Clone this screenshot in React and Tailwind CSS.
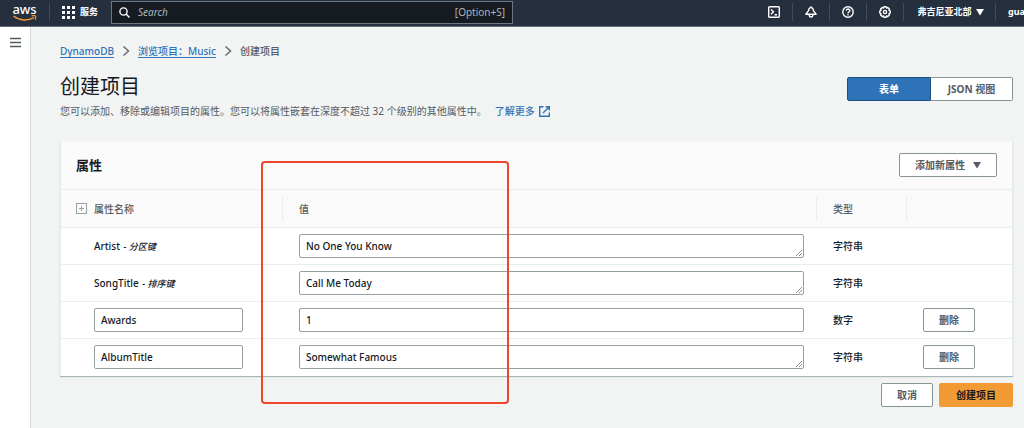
import React, { useState } from "react";

const attributes = [
  { name: "Artist", keyLabel: "分区键", value: "No One You Know", type: "字符串" },
  { name: "SongTitle", keyLabel: "排序键", value: "Call Me Today", type: "字符串" },
  { name: "Awards", value: "1", type: "数字" },
  { name: "AlbumTitle", value: "Somewhat Famous", type: "字符串" },
];

const Caret = () => (
  <svg className="w-2 h-2" viewBox="0 0 8 8" fill="currentColor" aria-hidden="true">
    <path d="M0 1h8L4 7.500z" />
  </svg>
);

const Chevron = () => (
  <svg
    className="w-2 h-3"
    viewBox="0 0 8 12"
    fill="none"
    stroke="#687078"
    strokeWidth="1.6"
    aria-hidden="true"
  >
    <path d="M1.5 1.5 6.5 6l-5 4.5" />
  </svg>
);

const NavIcon = ({ label, children }) => (
  <button
    aria-label={label}
    className="w-[37px] h-[18px] flex items-center justify-center border-r border-[#414b5a]"
  >
    <svg
      className="w-3 h-3"
      viewBox="0 0 12 12"
      fill="none"
      stroke="#fff"
      strokeWidth="1.4"
      strokeLinejoin="round"
    >
      {children}
    </svg>
  </button>
);

const Header = () => (
  <header className="h-[27px] pb-[2px] flex items-center bg-[#252f3e] border-b border-[#5f6b7a] text-white">
    <a href="#home" className="w-[50px] h-[18px] flex flex-col items-center border-r border-[#414b5a]">
      <span className="text-[13px] leading-3 font-medium">aws</span>
      <svg
        className="w-6 h-[6px] shrink-0"
        viewBox="0 0 24 6"
        fill="none"
        stroke="#f29b34"
        strokeWidth="1.4"
        aria-hidden="true"
      >
        <path d="M.5 1c6 4.800 14 5.200 20.500 1.600" />
        <path d="M18.500.8c4.500-.8 5.200.4 3.500 4" strokeWidth="1.2" />
      </svg>
    </a>
    <button className="ml-3 flex items-center gap-[5px] text-[9px] font-bold">
      <svg className="w-[13px] h-[13px]" viewBox="0 0 13 13" fill="#fff" aria-hidden="true">
        {[0, 5, 10].map((y) =>
          [0, 5, 10].map((x) => <rect key={x + "-" + y} x={x} y={y} width="3" height="3" />)
        )}
      </svg>
      服务
    </button>
    <label className="ml-[13px] w-[402px] h-[23px] flex items-center gap-2 px-[7px] bg-[#161b21] border border-[#6d777f]">
      <svg
        className="w-[11px] h-[11px] shrink-0"
        viewBox="0 0 11 11"
        fill="none"
        stroke="#fff"
        strokeWidth="1.4"
        aria-hidden="true"
      >
        <circle cx="4.500" cy="4.500" r="3.600" />
        <path d="m7 7 3.500 3.500" />
      </svg>
      <input
        type="text"
        aria-label="Search"
        placeholder="Search"
        className="flex-1 min-w-0 text-[10px] outline-none placeholder:italic placeholder:text-[#aab7b8]"
      />
      <span className="text-[10px] text-[#aab7b8]">[Option+S]</span>
    </label>
    <nav className="ml-auto flex items-center text-[9px] font-bold whitespace-nowrap">
      <NavIcon label="CloudShell">
        <rect x=".7" y=".7" width="10.600" height="10.600" rx="1" />
        <path d="m3 3.500 2.500 2.300L3 8.200M6.500 8.800h2.500" />
      </NavIcon>
      <NavIcon label="通知">
        <path d="M6 .3v1.300M6 1.600c1.700 0 2.300 1.200 2.300 2.800L11.200 8.300H.8l2.900-3.900c0-1.600.6-2.800 2.300-2.800zM4.200 8.500c0 3.400 3.600 3.400 3.600 0" />
      </NavIcon>
      <NavIcon label="帮助">
        <circle cx="6" cy="6" r="5.200" />
        <path d="M4.300 4.800C4.300 2.500 7.800 2.500 7.800 4.700 7.800 5.800 6 5.800 6 7.400M6 8.200v1.200" />
      </NavIcon>
      <NavIcon label="设置">
        <path d="M4.900.8h2.200l.4 1.200 1.300-.5 1.600 1.600-.5 1.300 1.300.5v2.200l-1.300.5.5 1.300-1.600 1.600-1.300-.5-.4 1.200H4.900l-.4-1.200-1.300.5-1.600-1.600.5-1.300-1.300-.5V4.900l1.300-.5-.5-1.300 1.600-1.600 1.300.5z" />
        <circle cx="6" cy="6" r="1.600" />
      </NavIcon>
      <button className="h-[18px] w-[92px] pl-[2px] flex items-center justify-center gap-1 border-r border-[#414b5a]">
        弗吉尼亚北部
        <Caret />
      </button>
      <button className="w-7 pl-3 text-left overflow-hidden">gua</button>
    </nav>
  </header>
);

const Button = ({ className = "", children }) => (
  <button
    className={`h-6 px-[15px] bg-white border border-[#879596] rounded-xs font-bold text-[#545b64] whitespace-nowrap ${className}`}
  >
    {children}
  </button>
);

const fieldClass =
  "block w-full h-6 px-[6px] bg-white border border-[#95a0a1] rounded-xs text-[#16191f] leading-[22px] outline-none";

const ValueField = ({ attribute }) => {
  const label = `${attribute.name} 值`;

  if (attribute.type === "数字") {
    return <input className={fieldClass} aria-label={label} defaultValue={attribute.value} />;
  }
  return (
    <div className="relative">
      <textarea
        rows={1}
        className={`${fieldClass} resize-none overflow-hidden`}
        aria-label={label}
        defaultValue={attribute.value}
      />
      <svg
        className="absolute right-[2px] bottom-[2px] w-[6px] h-[6px] pointer-events-none"
        viewBox="0 0 6 6"
        stroke="#777"
        strokeWidth=".8"
        aria-hidden="true"
      >
        <path d="M0 6 6 0M3 6l3-3" />
      </svg>
    </div>
  );
};

const AttributesTable = () => (
  <table className="w-full table-fixed text-left font-medium">
    <colgroup>
      <col className="w-[222px]" />
      <col />
      <col className="w-[90px]" />
      <col className="w-[105px]" />
    </colgroup>
    <thead className="bg-[#fafafa] text-[#545b64]">
      <tr className="h-[38px] border-y border-[#eaeded]">
        <th className="p-0 font-medium">
          <div className="h-6 pl-[15px] flex items-center gap-[7px] border-r border-[#eaeded]">
            <button aria-label="展开全部">
              <svg
                className="block w-[11px] h-[11px]"
                viewBox="0 0 11 11"
                fill="none"
                stroke="#95a5a6"
                aria-hidden="true"
              >
                <rect x=".5" y=".5" width="10" height="10" />
                <path d="M5.500 3v5M3 5.500h5" />
              </svg>
            </button>
            属性名称
          </div>
        </th>
        <th className="p-0 font-medium">
          <div className="h-6 pl-4 flex items-center border-r border-[#eaeded]">值</div>
        </th>
        <th className="p-0 font-medium">
          <div className="h-6 pl-4 flex items-center border-r border-[#eaeded]">类型</div>
        </th>
        <th className="p-0" aria-label="操作" />
      </tr>
    </thead>
    <tbody className="text-[#16191f]">
      {attributes.map((attribute) => (
        <tr key={attribute.name} className="h-[37px] border-b border-[#eaeded] last:border-b-0">
          <td className="pl-[33px] pr-10">
            {attribute.keyLabel ? (
              <>
                {attribute.name} <i className="ml-px text-[9px]">- {attribute.keyLabel}</i>
              </>
            ) : (
              <input className={fieldClass} aria-label="属性名称" defaultValue={attribute.name} />
            )}
          </td>
          <td className="pl-4 pr-[13px]">
            <ValueField attribute={attribute} />
          </td>
          <td className="pl-4">{attribute.type}</td>
          <td className="pl-4">{!attribute.keyLabel && <Button>删除</Button>}</td>
        </tr>
      ))}
    </tbody>
  </table>
);

const App = () => {
  const [view, setView] = useState("form");

  const viewClass = (name) =>
    view === name
      ? "bg-[#2e73b8] text-white border-[#1d4f83]"
      : "bg-white text-[#545b64] border-[#879596]";

  return (
    <div className="min-h-screen flex flex-col bg-[#f2f3f3] text-[10px] leading-4 font-['Noto_Sans','Noto_Sans_CJK_SC',sans-serif]">
      <Header />
      <div className="flex-1 flex">
        <aside className="w-[31px] shrink-0 pt-[10px] flex flex-col items-center bg-white border-r border-[#d5dbdb]">
          <button aria-label="打开导航">
            <svg
              className="block w-[11px] h-[11px]"
              viewBox="0 0 11 11"
              stroke="#545b64"
              strokeWidth="1.4"
              aria-hidden="true"
            >
              <path d="M0 1.500h11M0 5.500h11M0 9.500h11" />
            </svg>
          </button>
        </aside>

        <main className="flex-1 min-w-0 pl-[29px] pr-[11px] pt-4">
          {/* Breadcrumbs */}
          <nav className="flex items-center gap-2 text-[#545b64] font-medium">
            <a href="#dynamodb" className="text-[#2e73b8] underline underline-offset-2">
              DynamoDB
            </a>
            <Chevron />
            <a href="#music" className="text-[#2e73b8] underline underline-offset-2">
              浏览项目：Music
            </a>
            <Chevron />
            <span>创建项目</span>
          </nav>

          {/* Page title */}
          <div className="mt-4 flex items-center justify-between">
            <div>
              <h1 className="text-[20px] leading-6 text-[#16191f]">创建项目</h1>
              <p className="mt-1 text-[#545b64]">
                您可以添加、移除或编辑项目的属性。您可以将属性嵌套在深度不超过 32 个级别的其他属性中。
                <a
                  href="#more"
                  className="ml-2 inline-flex items-center gap-1 font-medium text-[#2e73b8]"
                >
                  了解更多
                  <svg
                    className="w-[11px] h-[11px]"
                    viewBox="0 0 11 11"
                    fill="none"
                    stroke="currentColor"
                    strokeWidth="1.4"
                    aria-hidden="true"
                  >
                    <path d="M4.500.7H.7v9.600h9.600V6.500M6.500.7h3.800v3.800M10.300.7 4 7" />
                  </svg>
                </a>
              </p>
            </div>
            <div className="pb-4 flex shrink-0 font-bold">
              <button
                onClick={() => setView("form")}
                className={`w-[84px] h-6 border rounded-l-xs ${viewClass("form")}`}
              >
                表单
              </button>
              <button
                onClick={() => setView("json")}
                className={`w-[82px] h-6 border border-l-0 rounded-r-xs ${viewClass("json")}`}
              >
                JSON 视图
              </button>
            </div>
          </div>

          <div className="relative mt-[22px]">
            <section className="bg-white border-x border-[#eaeded] shadow-[0_1px_1px_#aab7b8]">
              <div className="h-12 px-[15px] flex items-center justify-between bg-[#fafafa]">
                <h2 className="text-[13px] font-bold text-[#16191f]">属性</h2>
                <Button className="flex items-center gap-2">
                  添加新属性
                  <Caret />
                </Button>
              </div>
              <AttributesTable />
            </section>

            {/* Highlight around the value column */}
            <div className="absolute left-[201px] top-5 w-[248px] h-[243px] border-2 border-[#f0452d] rounded-sm pointer-events-none" />
          </div>

          <div className="mt-[7px] flex justify-end gap-[6px]">
            <Button>取消</Button>
            <button className="h-6 px-[17px] rounded-xs bg-[#f29b34] font-bold text-[#16191f]">
              创建项目
            </button>
          </div>
        </main>
      </div>
    </div>
  );
};

export default App;
